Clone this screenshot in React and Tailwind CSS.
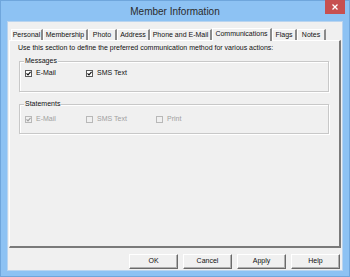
import React from 'react';

const tabs = [
  { label: 'Personal', w: 'w-[32px]' },
  { label: 'Membership', w: 'w-[45px]' },
  { label: 'Photo', w: 'w-[29px]' },
  { label: 'Address', w: 'w-[33px]' },
  { label: 'Phone and E-Mail', w: 'w-[62px]' },
  { label: 'Communications', w: 'w-[60px]', active: true },
  { label: 'Flags', w: 'w-[25px]' },
  { label: 'Notes', w: 'w-[29px]' },
];

function Check({ label, checked, disabled, className = '' }) {
  return (
    <div className={`flex items-center gap-[4px] ${className}`}>
      <span
        className={`w-[7px] h-[7px] flex items-center justify-center border ${
          disabled ? 'border-[#b8b8b8] bg-[#f0f0f0]' : 'border-[#5a5a5a] bg-white'
        }`}
      >
        {checked && (
          <svg width="5" height="5" viewBox="0 0 5 5">
            <path d="M0.5 2.3 L2 3.8 L4.6 0.8" fill="none" stroke={disabled ? '#a0a0a0' : '#111'} strokeWidth="1.2" />
          </svg>
        )}
      </span>
      <span className={disabled ? 'text-[#a0a0a0]' : 'text-[#111]'}>{label}</span>
    </div>
  );
}

function GroupBox({ title, children, className = '' }) {
  return (
    <div className={`relative border border-[#c8c8c8] shadow-[inset_1px_1px_0_#ffffff,1px_1px_0_#ffffff] ${className}`}>
      <span className="absolute left-[4px] top-[-6px] bg-[#f0f0f0] px-[1px] leading-[10px] text-[#111]">{title}</span>
      {children}
    </div>
  );
}

export default function App() {
  return (
    <div className="w-[350px] h-[277px] bg-[#8dc2f3] border border-[#6fa6dc] flex flex-col font-['Liberation_Sans',Arial,sans-serif]">
      {/* Title bar */}
      <div className="relative h-[20px] flex items-center justify-center">
        <span className="text-[10px] text-[#2b2b2b]">Member Information</span>
        <div className="absolute right-[4px] top-[-1px] w-[20px] h-[14px] bg-[#c75050] flex items-center justify-center">
          <svg width="6" height="6" viewBox="0 0 6 6">
            <path d="M0.5 0.5 L5.5 5.5 M5.5 0.5 L0.5 5.5" stroke="#fff" strokeWidth="1.3" />
          </svg>
        </div>
      </div>

      {/* Client area */}
      <div className="mx-[6px] mb-[5px] flex-1 bg-[#f0f0f0] border border-[#b9d4ef] flex flex-col pt-[5px] pl-[1px] pr-[1px] text-[7px]">
        {/* Tabs */}
        <div className="flex items-end h-[13px] pl-[2px] relative z-10">
          {tabs.map((t) =>
            t.active ? (
              <div
                key={t.label}
                className={`${t.w} h-[13px] -mb-px bg-[#f0f0f0] border-t border-l border-white border-r-2 border-r-[#8a8a8a] flex items-center justify-center text-[#111] pb-[2px]`}
              >
                {t.label}
              </div>
            ) : (
              <div
                key={t.label}
                className={`${t.w} h-[11px] bg-[#f0f0f0] border-t border-l border-white border-r-2 border-r-[#8a8a8a] flex items-center justify-center text-[#111]`}
              >
                {t.label}
              </div>
            )
          )}
        </div>

        {/* Panel */}
        <div className="h-[208px] border-t border-l border-white border-r-2 border-b-2 border-r-[#7a7a7a] border-b-[#7a7a7a] px-[9px] pt-[2px] flex flex-col">
          <div className="text-[#111] leading-[9px] ml-[-1px]">
            Use this section to define the preferred communication method for various actions:
          </div>

          <GroupBox title="Messages" className="mt-[9px] mr-[1px] h-[31px]">
            <div className="flex items-center pt-[6px] pl-[5px]">
              <Check label="E-Mail" checked className="w-[61px]" />
              <Check label="SMS Text" checked />
            </div>
          </GroupBox>

          <GroupBox title="Statements" className="mt-[12px] mr-[1px] h-[30px]">
            <div className="flex items-center pt-[9px] pl-[5px]">
              <Check label="E-Mail" checked disabled className="w-[61px]" />
              <Check label="SMS Text" disabled className="w-[70px]" />
              <Check label="Print" disabled />
            </div>
          </GroupBox>
        </div>

        {/* Buttons */}
        <div className="flex justify-end gap-[5px] mt-[6px] pr-[1px]">
          {['OK', 'Cancel', 'Apply', 'Help'].map((b) => (
            <button
              key={b}
              className="w-[49px] h-[15px] bg-[#f0f0f0] border border-t-white border-l-white border-r-[#6a6a6a] border-b-[#6a6a6a] shadow-[inset_-1px_-1px_0_#b0b0b0] flex items-center justify-center text-[#111] text-[7px]"
            >
              {b}
            </button>
          ))}
        </div>
      </div>
    </div>
  );
}
